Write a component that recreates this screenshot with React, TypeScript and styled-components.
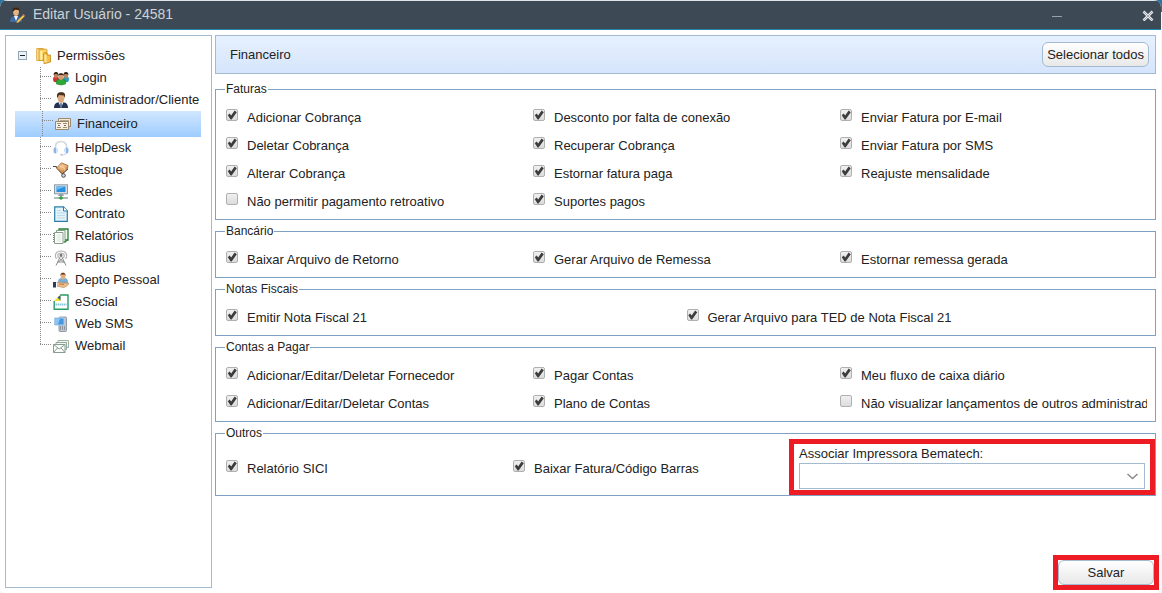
import React, { useState } from "react";
import styled, { createGlobalStyle, css } from "styled-components";

const GlobalStyle = createGlobalStyle`
  * { box-sizing: border-box; }
  body {
    margin: 0;
    background: #f4f6f7;
    font-family: "Liberation Sans", Arial, Helvetica, sans-serif;
    font-size: 13px;
    color: #222;
  }
  button, select, input { font: inherit; color: inherit; margin: 0; }
`;

const Desktop = styled.div`
  background: linear-gradient(#2a74a8 0 12px, #f4f6f7 12px);
`;

const Window = styled.div`
  display: flex;
  flex-direction: column;
  min-height: 100vh;
  margin-right: 1px;
  background: #fff;
  border-radius: 7px 7px 5px 5px;
  overflow: hidden;
`;

const TitleBar = styled.header`
  display: flex;
  align-items: center;
  height: 30px;
  padding: 0 7px 0 9px;
  background: #3d4a55;
  border-top: 1px solid #dfe5e8;
  border-bottom: 1px solid #1c87a8;
`;

const Title = styled.h1`
  flex: 1;
  margin: 0 0 0 8px;
  padding-bottom: 2px;
  font-size: 14px;
  line-height: 20px;
  font-weight: 400;
  color: #ccd3d8;
`;

const WindowButton = styled.button`
  display: flex;
  align-items: center;
  justify-content: center;
  width: 12px;
  height: 20px;
  margin-left: 79px;
  padding: 0;
  border: 0;
  background: none;
`;

const Body = styled.div`
  display: flex;
  flex: 1;
  gap: 3px;
  padding: 5px;
`;

const Sidebar = styled.nav`
  width: 207px;
  flex: none;
  padding: 9px 10px 9px 9px;
  border: 1px solid #a3bad0;
`;

const TreeList = styled.ul`
  list-style: none;
  margin: 0;
  padding: 0;
`;

const RootRow = styled.div`
  display: flex;
  align-items: center;
  height: 22px;
  padding-left: 3px;
`;

const Toggle = styled.button`
  display: flex;
  width: 9px;
  height: 9px;
  margin: 0 9px 2px 0;
  padding: 0;
  border: 0;
  background: none;
`;

const RootText = styled.span`
  margin-left: 5px;
  line-height: 22px;
  white-space: nowrap;
`;

const TreeText = styled(RootText)`
  margin-left: 6px;
`;

const Guide = styled.span<{ $last: boolean }>`
  align-self: stretch;
  flex: none;
  width: 13px;
  background:
    repeating-linear-gradient(#888 0 1px, transparent 1px 2px) 0 0 / 1px ${(p) => (p.$last ? "10px" : "100%")} no-repeat,
    repeating-linear-gradient(90deg, #888 0 1px, transparent 1px 2px) 0 9px / 11px 1px no-repeat;
`;

const TreeLink = styled.a<{ $selected: boolean }>`
  display: flex;
  align-items: center;
  height: 22px;
  padding-left: 25px;
  color: inherit;
  text-decoration: none;
  ${(p) =>
    p.$selected &&
    css`
      height: 26px;
      padding-left: 27px;
      background: linear-gradient(#d2e7ff, #9dccff);
    `}
`;

const Main = styled.main`
  display: flex;
  flex-direction: column;
  flex: 1;
  min-width: 0;
`;

const SectionHeader = styled.div`
  display: flex;
  align-items: center;
  justify-content: space-between;
  height: 39px;
  margin-bottom: 8px;
  padding: 0 6px 0 14px;
  border: 1px solid #a3bad0;
  background: linear-gradient(#e7f1ff, #d5e5fc);
`;

const SectionTitle = styled.h2`
  margin: 0;
  font-size: 13px;
  font-weight: 400;
`;

const SoftButton = styled.button<{ $wide?: boolean }>`
  display: block;
  min-width: ${(p) => (p.$wide ? "96px" : "0")};
  height: 25px;
  padding: 0 4px;
  border: 1px solid #a3bad0;
  border-radius: 6px;
  background: linear-gradient(#fff, #e8e8e8);
  white-space: nowrap;
`;

const Group = styled.fieldset`
  min-width: 0;
  margin: 0 0 4px;
  padding: 0;
  border: 1px solid #7fa2c4;
`;

const GroupTitle = styled.legend`
  margin-left: 9px;
  padding: 0 1px;
  font-size: 12px;
  line-height: 15px;
`;

const CheckGrid = styled.div<{ $columns: number }>`
  display: grid;
  grid-template-columns: repeat(${(p) => p.$columns}, minmax(0, 1fr));
  padding: 6px 8px 4px 10px;
`;

const OthersGrid = styled.div`
  display: grid;
  grid-template-columns: 287fr 281fr 361fr;
  align-items: center;
  padding-left: 10px;
`;

const CheckLabel = styled.label`
  display: flex;
  min-width: 0;
  height: 28px;
  padding-top: 6px;
`;

const CheckText = styled.span`
  flex: 1;
  margin-left: 9px;
  line-height: 18px;
  white-space: nowrap;
  overflow: hidden;
`;

const CheckBox = styled.input`
  appearance: none;
  display: grid;
  flex: none;
  width: 12px;
  height: 12px;
  border: 1px solid #b0b0b0;
  border-radius: 2px;
  background: linear-gradient(#f0f0f0, #dcdcdc);
  &:checked::before {
    content: "";
    background: #3c3c3c;
    clip-path: polygon(8% 52%, 26% 36%, 42% 54%, 76% 6%, 98% 22%, 46% 94%, 36% 94%);
  }
`;

const marker = css`
  outline: 5px solid #ed1c24;
  background: #fff;
`;

const PrinterField = styled.div`
  ${marker}
  display: flex;
  flex-direction: column;
  height: 46px;
  margin: 3px 5px 5px 0;
  padding: 0 5px;
`;

const PrinterLabel = styled.label`
  line-height: 19px;
`;

const SelectBox = styled.div`
  display: grid;
  align-items: center;
  > * { grid-area: 1 / 1; }
  > svg { justify-self: end; margin-right: 7px; pointer-events: none; }
`;

const Select = styled.select`
  appearance: none;
  width: 100%;
  height: 26px;
  padding: 0 24px 0 5px;
  border: 1px solid #a3bad0;
  border-radius: 0;
  background: #fff;
`;

const Footer = styled.footer`
  display: flex;
  justify-content: flex-end;
  margin-top: auto;
  padding: 8px 2px 3px;
`;

const SaveMarker = styled.div`
  ${marker}
`;

type IconName =
  | "edit" | "folder" | "login" | "admin" | "money" | "headset" | "stock" | "network"
  | "contract" | "reports" | "radius" | "staff" | "esocial" | "sms" | "mail";

const icons: Record<IconName, React.ReactNode> = {
  edit: (
    <>
      <path d="M1 15c0-4 2-6 6-6s6 2 6 6z" fill="#3f6ba5" />
      <path d="M5 9h4l-2 5z" fill="#eef4fb" />
      <path d="M4 4c0-5 6-5 6 0 0 3-1 5-3 5S4 7 4 4z" fill="#e5b384" />
      <path d="M3.700 5C3 0 6 0 7 .3c3-.3 4 1.700 3.300 4.700L9.500 3 6 2.800z" fill="#3b2415" />
      <path d="M8 14l6-6 1.500 1.500-6 6L7.500 16z" fill="#f0c75a" stroke="#9b742d" strokeWidth=".5" />
      <path d="M13.500 8l1-1 1.500 1.500-1 1z" fill="#d67c74" />
    </>
  ),
  folder: (
    <>
      <path d="M.7.5h6.500v12H.7z" fill="#fbe39a" stroke="#d79a1e" strokeWidth=".8" />
      <path d="M3 1.200h7.500l.5 1v10H3z" fill="#f8d56b" stroke="#d0921a" strokeWidth=".8" />
      <path d="M4.500 3h1.500v9H4.500z" fill="#fff0b8" />
      <path d="M7.500 6l1-1.500 2.500.5v2h3.500v7L8 15.800z" fill="#f3c044" stroke="#c4861a" strokeWidth=".8" />
      <path d="M8.500 6.500l2 .5v7l-2 1z" fill="#fdeaa6" />
    </>
  ),
  login: (
    <>
      <path d="M0 10c0-3 1-4 3-4s3 1 3 4l-2 2H1z" fill="#cf3434" />
      <path d="M10 10c0-3 1-4 3-4s3 1 3 4l-1 2h-3z" fill="#359bbd" />
      <path d="M.8 5c0-4 4.600-4 4.600 0L4 8H2z" fill="#b78257" />
      <path d="M10.600 5c0-4 4.600-4 4.600 0L14 8h-2z" fill="#b78257" />
      <path d="M.5 5C.5 1 5.500 1 5.500 5L4 4H2zM10.500 5c0-4 5-4 5 0L14 4h-2z" fill="#2c2320" />
      <path d="M3.500 14c-1-4 1-5 4.500-5s5.500 1 4.500 5L8 15z" fill="#2daa35" stroke="#187c22" strokeWidth=".6" />
      <path d="M5.500 6c0-4 5-4 5 0 0 2-1 4-2.500 4S5.500 8 5.500 6z" fill="#d49b70" />
      <path d="M5 6.500C4.500 2 11.500 2 11 6.500L10 5H6z" fill="#35251f" />
    </>
  ),
  admin: (
    <>
      <path d="M1 16c0-4 2-6 7-6s7 2 7 6z" fill="#263451" />
      <path d="M5.500 10h5L8 16z" fill="#f4f5f8" />
      <path d="M7.400 11h1.200l.6 3L8 16l-1.200-2z" fill="#6076a4" />
      <path d="M4.500 5c0-6 7-6 7 0 0 3-1.500 6-3.500 6S4.500 8 4.500 5z" fill="#dcaa7e" />
      <path d="M4.200 6C3 1 6 0 8 .3c3-.3 5 1.200 3.800 5.700L11 3.500 6 3z" fill="#493020" />
    </>
  ),
  money: (
    <>
      <path d="M3.500 2.500h12v8h-12z" fill="#eee6d6" stroke="#a08b6d" />
      <path d="M5 4.500h9" stroke="#b5a68e" />
      <path d="M.5 5.500h13v8H.5z" fill="#f7f1e5" stroke="#9c8566" />
      <path d="M2 7.500h4m2 0h4M2 11.500h4m2 0h4" stroke="#a08f78" />
      <path d="M3 9.500h2m4 0h2" stroke="#7d6d58" />
    </>
  ),
  headset: (
    <>
      <path d="M2.500 9C1.500 4 4 1.500 8 1.500S14.500 4 13.500 9" fill="none" stroke="#d5dae0" strokeWidth="1.700" />
      <path d="M13.500 12c0 2-2 3.200-5 3" fill="none" stroke="#ced4dc" />
      <rect x=".6" y="7.500" width="3.800" height="6" rx="1.700" fill="#8bb6ed" />
      <rect x="11.600" y="7.500" width="3.800" height="6" rx="1.700" fill="#8bb6ed" />
      <path d="M3.500 8v5M12.500 8v5" stroke="#d8e8fc" />
      <rect x="7" y="14" width="3" height="1.600" rx=".8" fill="#bdc7d4" />
    </>
  ),
  stock: (
    <>
      <path d="M0 4.500h3l6 7" fill="none" stroke="#454545" strokeWidth="1.200" />
      <path d="M3.500 6L8.500.8l6.500 2.700-.5 4L9.500 12z" fill="#d08f4c" stroke="#95602f" strokeWidth=".7" />
      <path d="M4 6l4.500-4.700L14.500 4 9.500 8.800z" fill="#e5b078" />
      <path d="M6.200 3.800l5.700 2.700v3M7.500 5l2-1.500 2 .8" fill="none" stroke="#fae0bd" strokeWidth=".8" />
      <path d="M9 12l6-5" stroke="#555" />
      <circle cx="10.500" cy="13.500" r="1.800" fill="#ddd" stroke="#444" />
    </>
  ),
  network: (
    <>
      <rect x="1.500" y=".8" width="13" height="9" fill="#d5dce2" stroke="#8e9ba7" />
      <path d="M3.500 2.500h9v5.500h-9z" fill="#278fdd" />
      <path d="M3.500 2.500h9L3.500 6z" fill="#6bbcf3" />
      <path d="M6 10h4l1 2H5z" fill="#919da7" />
      <path d="M1 14h14M8 12v2" stroke="#68767e" />
      <path d="M8 12l2.500 2L8 16l-2.500-2z" fill="#33a443" />
    </>
  ),
  contract: (
    <>
      <path d="M1.700.8h8.800l3.800 4v10.500H1.700z" fill="#e4f2fa" stroke="#287da8" strokeWidth="1.200" />
      <path d="M10.500 1v4h4" fill="#fff" stroke="#287da8" />
      <path d="M4 4.500h4M4 7h8M4 9.500h8M4 12h8" stroke="#bcdcec" />
    </>
  ),
  reports: (
    <>
      <path d="M6 1h9v11H6z" fill="#f4faf2" stroke="#287a3b" strokeWidth="1.300" />
      <path d="M3.500 2.500h8.500V14H3.500z" fill="#fff" stroke="#75a37b" />
      <path d="M1.500 4.500h8.500v11H1.500z" fill="#fff" stroke="#8a9d8b" />
      <path d="M3.500 7h5m-5 2h5m-5 2h5m-5 2h5" stroke="#d8e0d9" />
      <path d="M.5 5v10" stroke="#718873" strokeDasharray="1 1" />
      <path d="M11 14l4-3v1l-3 3z" fill="#287a3b" />
    </>
  ),
  radius: (
    <>
      <path d="M3.500 9C1 5 3 1 8 1s7 4 4.500 8M5.500 8C4 5 5 3 8 3s4 2 2.500 5" fill="none" stroke="#b2b2b2" strokeWidth="1.200" />
      <path d="M8 5L3 15.500M8 5l5 10.500M6.500 8.500L12 13M9.500 8.500L4 13M5 12h6" fill="none" stroke="#8c8c8c" />
      <circle cx="8" cy="5" r="1.500" fill="#777" />
    </>
  ),
  staff: (
    <>
      <path d="M5 11c0-4 1-5 5-5s5 1 5 5z" fill="#79add8" />
      <path d="M7.500 3.500c0-4 5-4 5 0 0 2-1 4-2.500 4s-2.500-2-2.500-4z" fill="#e3af7b" />
      <path d="M7.300 4C7-.5 13-.5 12.700 4L12 2.500H8z" fill="#5c3924" />
      <path d="M3 11l3-1 4 1h5.500c1 1-2 4-5 4.500L3 14z" fill="#edbc8d" stroke="#b57d4c" strokeWidth=".6" />
      <path d="M6 12l5 .5" stroke="#b57d4c" />
      <path d="M0 10h3v5.500H0z" fill="#2c3c60" />
      <path d="M3 10.500h1v4.500H3z" fill="#fff" />
    </>
  ),
  esocial: (
    <>
      <path d="M7 1h8v14.200H1.200V7" fill="#fff" stroke="#289c66" strokeWidth="1.400" />
      <path d="M1 7l6.500-6.500V7z" fill="#f1df24" />
      <path d="M4.500 3.500l3 3V1z" fill="#28599c" />
      <path d="M2.500 10.500h11" stroke="#86c6e0" strokeWidth="2" strokeDasharray="1.500 .5" />
    </>
  ),
  sms: (
    <>
      <rect x="6" y="1" width="7.500" height="14.500" rx="1" fill="#c2c8cf" stroke="#7e8894" strokeWidth=".8" />
      <path d="M1.500 2h9.500v7H1.500z" fill="#4597e2" stroke="#a4c8e8" />
      <path d="M2 2.500h5l-2 6H2z" fill="#8dc6f4" />
      <path d="M7 11h5m-5 2h5" stroke="#59616a" strokeDasharray="1 1" />
    </>
  ),
  mail: (
    <>
      <path d="M5 2.500h10.500v7H5z" fill="#f4f6f4" stroke="#9fb0a5" />
      <path d="M3 4.500h10.500v7H3z" fill="#f4f6f4" stroke="#91a69a" />
      <path d="M.5 6.500h11.500v8H.5z" fill="#fbfcfb" stroke="#879d91" />
      <path d="M.5 6.500l5.700 4.500L12 6.500M.5 14.500L4.500 10M12 14.500L8 10" fill="none" stroke="#879d91" />
    </>
  ),
};

const Icon = ({ name }: { name: IconName }) => (
  <svg width="16" height="16" viewBox="0 0 16 16" aria-hidden="true">
    {icons[name]}
  </svg>
);

const treeItems: [string, IconName][] = [
  ["Login", "login"],
  ["Administrador/Cliente", "admin"],
  ["Financeiro", "money"],
  ["HelpDesk", "headset"],
  ["Estoque", "stock"],
  ["Redes", "network"],
  ["Contrato", "contract"],
  ["Relatórios", "reports"],
  ["Radius", "radius"],
  ["Depto Pessoal", "staff"],
  ["eSocial", "esocial"],
  ["Web SMS", "sms"],
  ["Webmail", "mail"],
];

interface PermissionGroup {
  title: string;
  columns: number;
  options: string[];
}

const groups: PermissionGroup[] = [
  {
    title: "Faturas",
    columns: 3,
    options: [
      "Adicionar Cobrança", "Desconto por falta de conexão", "Enviar Fatura por E-mail",
      "Deletar Cobrança", "Recuperar Cobrança", "Enviar Fatura por SMS",
      "Alterar Cobrança", "Estornar fatura paga", "Reajuste mensalidade",
      "Não permitir pagamento retroativo", "Suportes pagos",
    ],
  },
  {
    title: "Bancário",
    columns: 3,
    options: ["Baixar Arquivo de Retorno", "Gerar Arquivo de Remessa", "Estornar remessa gerada"],
  },
  {
    title: "Notas Fiscais",
    columns: 2,
    options: ["Emitir Nota Fiscal 21", "Gerar Arquivo para TED de Nota Fiscal 21"],
  },
  {
    title: "Contas a Pagar",
    columns: 3,
    options: [
      "Adicionar/Editar/Deletar Fornecedor", "Pagar Contas", "Meu fluxo de caixa diário",
      "Adicionar/Editar/Deletar Contas", "Plano de Contas",
      "Não visualizar lançamentos de outros administradores",
    ],
  },
];

const otherOptions = ["Relatório SICI", "Baixar Fatura/Código Barras"];
const initiallyOff = [
  "Não permitir pagamento retroativo",
  "Não visualizar lançamentos de outros administradores",
];

export default function App() {
  const [off, setOff] = useState<string[]>(initiallyOff);
  const [selected, setSelected] = useState("Financeiro");
  const [open, setOpen] = useState(true);

  const toggle = (name: string) =>
    setOff((list) => (list.includes(name) ? list.filter((n) => n !== name) : [...list, name]));

  const renderOption = (name: string) => (
    <CheckLabel key={name}>
      <CheckBox type="checkbox" checked={!off.includes(name)} onChange={() => toggle(name)} />
      <CheckText>{name}</CheckText>
    </CheckLabel>
  );

  return (
    <Desktop>
      <GlobalStyle />
      <Window>
        <TitleBar>
          <Icon name="edit" />
          <Title>Editar Usuário - 24581</Title>
          <WindowButton aria-label="Minimizar">
            <svg width="12" height="12" viewBox="0 0 12 12">
              <path d="M1 7.500h10" stroke="#98a1a8" />
            </svg>
          </WindowButton>
          <WindowButton aria-label="Fechar">
            <svg width="12" height="12" viewBox="0 0 12 12">
              <path d="M1.500 2.500l9 9M10.500 2.500l-9 9" stroke="#e8ebec" strokeWidth="2.600" />
              <path d="M2 3l8 8M10 3l-8 8" stroke="#8d969d" strokeWidth=".8" />
            </svg>
          </WindowButton>
        </TitleBar>
        <Body>
          <Sidebar aria-label="Permissões">
            <RootRow>
              <Toggle aria-label="Expandir ou recolher" aria-expanded={open} onClick={() => setOpen(!open)}>
                <svg width="9" height="9" viewBox="0 0 9 9">
                  <rect x=".5" y=".5" width="8" height="8" fill="#eef2f5" stroke="#8fa6b8" />
                  <path d={open ? "M2 4.500h5" : "M2 4.500h5M4.500 2v5"} stroke="#222" />
                </svg>
              </Toggle>
              <Icon name="folder" />
              <RootText>Permissões</RootText>
            </RootRow>
            {open && (
              <TreeList>
                {treeItems.map(([name, icon], i) => (
                  <li key={name}>
                    <TreeLink href="#" $selected={name === selected} onClick={() => setSelected(name)}>
                      <Guide $last={i === treeItems.length - 1} />
                      <Icon name={icon} />
                      <TreeText>{name}</TreeText>
                    </TreeLink>
                  </li>
                ))}
              </TreeList>
            )}
          </Sidebar>
          <Main>
            <SectionHeader>
              <SectionTitle>Financeiro</SectionTitle>
              <SoftButton type="button" onClick={() => setOff([])}>Selecionar todos</SoftButton>
            </SectionHeader>
            {groups.map((group) => (
              <Group key={group.title}>
                <GroupTitle>{group.title}</GroupTitle>
                <CheckGrid $columns={group.columns}>{group.options.map(renderOption)}</CheckGrid>
              </Group>
            ))}
            <Group>
              <GroupTitle>Outros</GroupTitle>
              <OthersGrid>
                {otherOptions.map(renderOption)}
                <PrinterField>
                  <PrinterLabel htmlFor="printer">Associar Impressora Bematech:</PrinterLabel>
                  <SelectBox>
                    <Select id="printer" defaultValue="">
                      <option value="" />
                    </Select>
                    <svg width="11" height="7" viewBox="0 0 11 7">
                      <path d="M.5 1l5 4.500 5-4.500" fill="none" stroke="#8a8a8a" strokeWidth="1.500" />
                    </svg>
                  </SelectBox>
                </PrinterField>
              </OthersGrid>
            </Group>
            <Footer>
              <SaveMarker>
                <SoftButton type="button" $wide>Salvar</SoftButton>
              </SaveMarker>
            </Footer>
          </Main>
        </Body>
      </Window>
    </Desktop>
  );
}
